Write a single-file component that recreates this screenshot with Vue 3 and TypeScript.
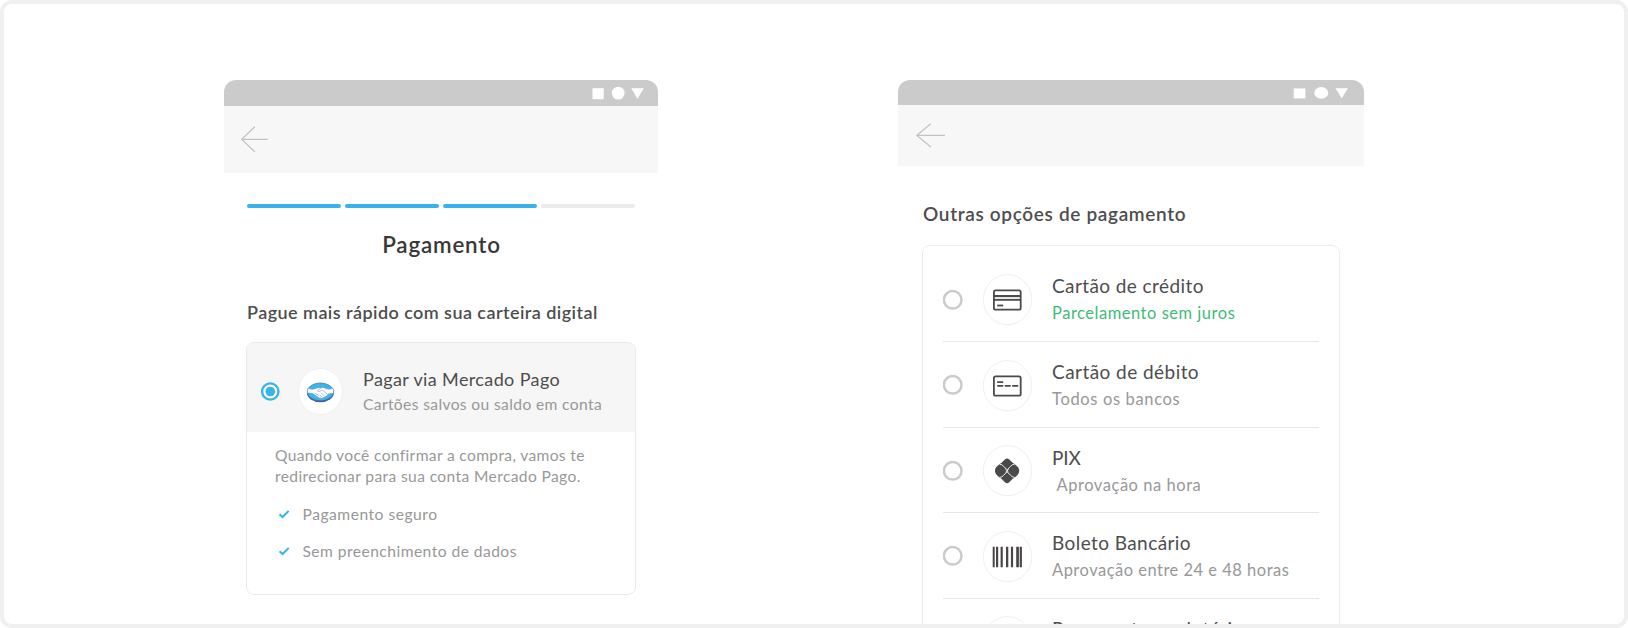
<script setup lang="ts">
type IconName = 'credit' | 'debit' | 'pix' | 'barcode' | 'none'

interface PaymentOption {
  title: string
  titleTracking: number
  note: string
  noteTracking: number
  icon: IconName
  highlight?: boolean
  indent?: boolean
}

const steps: boolean[] = [true, true, true, false]

const benefits: { label: string; tracking: number }[] = [
  { label: 'Pagamento seguro', tracking: 0.52 },
  { label: 'Sem preenchimento de dados', tracking: 0.46 },
]

const options: PaymentOption[] = [
  { title: 'Cartão de crédito', titleTracking: 0.41, note: 'Parcelamento sem juros', noteTracking: 0.52, icon: 'credit', highlight: true },
  { title: 'Cartão de débito', titleTracking: 0.45, note: 'Todos os bancos', noteTracking: 0.65, icon: 'debit' },
  { title: 'PIX', titleTracking: -0.1, note: 'Aprovação na hora', noteTracking: 0.54, icon: 'pix', indent: true },
  { title: 'Boleto Bancário', titleTracking: 0.42, note: 'Aprovação entre 24 e 48 horas', noteTracking: 0.49, icon: 'barcode' },
  { title: 'Pagamento em lotérica', titleTracking: 0.43, note: '', noteTracking: 0, icon: 'none' },
]
</script>

<template>
  <main class="frame">
    <section class="phone phone-left">
      <div class="status">
        <svg width="52" height="14" viewBox="0 0 52 14">
          <rect x="0.5" y="2.2" width="11.2" height="11" />
          <circle cx="26.2" cy="7.1" r="6.4" />
          <path d="M39.3 2.2h12.4l-6.2 10.9z" />
        </svg>
      </div>
      <div class="navbar">
        <svg class="arrow" width="28" height="27" viewBox="0 0 28 27">
          <path d="M26.3 13.4H.8M13.5 1 .8 13.4 13.5 25.5" />
        </svg>
      </div>
      <div class="content">
        <div class="steps">
          <span v-for="(done, i) in steps" :key="i" class="step" :class="{ done }"></span>
        </div>
        <h1 class="page-title">Pagamento</h1>
        <h2 class="wallet-title">Pague mais rápido com sua carteira digital</h2>
        <div class="wallet">
          <div class="wallet-head">
            <svg class="wallet-radio" width="19" height="19" viewBox="0 0 19 19">
              <circle cx="9.3" cy="9.5" r="8.2" fill="#fff" stroke="#35b3ea" stroke-width="2.3" />
              <circle cx="9.3" cy="9.5" r="4.8" fill="#35b3ea" />
            </svg>
            <svg class="wallet-logo" width="45" height="47" viewBox="0 0 45 47">
              <ellipse cx="22.5" cy="23.5" rx="22" ry="23" fill="#fff" stroke="#efefef" />
              <ellipse cx="22.4" cy="24.8" rx="13.5" ry="9.4" fill="#47659c" />
              <ellipse cx="22.4" cy="23.8" rx="13.1" ry="8.9" fill="#34b9ea" stroke="#4c6aa2" stroke-width=".7" />
              <path d="M10.1 20.3c3.1 1.2 6 1.1 8.8-.2 1.5-.6 2.7-.6 3.8 0 1.3-.7 2.6-.7 4 0 2.9 1.4 5.5 1.3 8.1.2.8 1.6.9 3.6.3 5.2-2.7-.1-4.8.3-5.5 1.2-.4 1.2-1.2 1.7-2.2 1.6-.5 1-1.3 1.4-2.2 1.2-.9 1.1-2.3 1.1-3.1.2-1 .5-2 0-2.3-.9-1.2.1-1.8-.5-1.8-1.4-1.4.2-2.2-.5-2.2-1.4-1.7-.7-3.8-1.1-6-.8-.6-1.7-.5-3.4.3-4.9z" fill="#fff" stroke="#7d8bc0" stroke-width=".6" />
              <path d="M22.7 20.1l-3.2 2.7c.9 1.1 2.4.9 3.7-.3l1.4-.3 5 4.3M23.2 25.2l3.6 2.9M21.5 27l3 2.2M16.2 26.6c.9-1.5 2.3-1.3 2.4 0 1.4-.5 2.2.3 1.7 1.6" fill="none" stroke="#8490c0" stroke-width=".6" />
            </svg>
            <div class="wallet-label">
              <div class="wallet-name">Pagar via Mercado Pago</div>
              <div class="wallet-note">Cartões salvos ou saldo em conta</div>
            </div>
          </div>
          <div class="wallet-body">
            <p class="redirect">
              <span class="line-a">Quando você confirmar a compra, vamos te</span><br />
              <span class="line-b">redirecionar para sua conta Mercado Pago.</span>
            </p>
            <ul class="benefits">
              <li v-for="b in benefits" :key="b.label">
                <svg width="12" height="10" viewBox="0 0 12 10"><path d="M1.5 5.2 4.6 8 10.7 1.9" /></svg>
                <span :style="{ letterSpacing: b.tracking + 'px' }">{{ b.label }}</span>
              </li>
            </ul>
          </div>
        </div>
      </div>
    </section>

    <section class="phone phone-right">
      <div class="status">
        <svg width="55" height="14" viewBox="0 0 55 14">
          <rect x="0.7" y="2.4" width="11.7" height="10" />
          <ellipse cx="28.3" cy="6.9" rx="7" ry="5.9" />
          <path d="M42.4 2.3H55l-6.3 9.9z" />
        </svg>
      </div>
      <div class="navbar">
        <svg class="arrow" width="30" height="25" viewBox="0 0 30 25">
          <path d="M28.5 12.4H.9M14.5 1 .9 12.4 14.5 23.8" />
        </svg>
      </div>
      <div class="content">
        <h2 class="options-title">Outras opções de pagamento</h2>
        <ul class="options">
          <li v-for="o in options" :key="o.title" class="option">
            <svg class="radio" width="20" height="20" viewBox="0 0 20 20">
              <circle cx="9.7" cy="9.8" r="8.8" fill="#fff" stroke="#cbcbcb" stroke-width="2.5" />
            </svg>
            <svg class="icon" width="50" height="52" viewBox="0 0 50 52">
              <g transform="translate(-0.6 -0.5)">
                <ellipse cx="25.1" cy="26.2" rx="24.2" ry="25.1" fill="#fff" stroke="#efefef" />
                <g v-if="o.icon === 'credit'" fill="none" stroke="#4a4a4a" stroke-width="1.8">
                  <path d="M12 24.4h26" stroke="#ddd" stroke-width="1.5" />
                  <rect x="11.5" y="16.9" width="26.8" height="19.3" rx="1.8" />
                  <path d="M11.5 22.5h26.8M11.5 26.4h26.8" />
                  <path d="M14.8 32h6" />
                </g>
                <g v-else-if="o.icon === 'debit'" fill="none" stroke="#4a4a4a" stroke-width="1.8">
                  <rect x="11.5" y="16.9" width="26.8" height="19.3" rx="1.8" />
                  <path d="M14.8 22.6h6M14.8 26.4h6M22.3 26.4h6M29.8 26.4h6" />
                </g>
                <g v-else-if="o.icon === 'pix'" transform="translate(24.7 26.3)">
                  <path
                    d="M-2.2-11.4Q0-13.4 2.2-11.4L5.6-8Q8.5-6.4 11-3.5 13.3 0 11 3.5 8.5 6.4 5.6 8L2.2 11.4Q0 13.4-2.2 11.4L-5.6 8Q-8.5 6.4-11 3.5-13.3 0-11-3.5-8.5-6.4-5.6-8Z"
                    fill="#4a4a4a"
                  />
                  <path
                    d="M-7.5-6.6Q-5-6.6-3.3-4.3L0-1 3.3-4.3Q5-6.6 7.5-6.6M-7.5 6.6Q-5 6.6-3.3 4.3L0 1 3.3 4.3Q5 6.6 7.5 6.6M-1.5-1.5 1.5 1.5M1.5-1.5-1.5 1.5"
                    fill="none"
                    stroke="#fff"
                    stroke-width=".9"
                  />
                </g>
                <path
                  v-else-if="o.icon === 'barcode'"
                  d="M10.3 16.3h2v20.5h-2zM13.6 16.3h2.2v20.5h-2.2zM18.2 16.3h2.2v20.5h-2.2zM23.6 16.3h2.3v20.5h-2.3zM28.5 16.3h2.2v20.5h-2.2zM33.8 16.3h2.7v20.5h-2.7zM37.3 16.3h2.2v20.5h-2.2z"
                  fill="#4a4646"
                />
              </g>
            </svg>
            <div class="option-text">
              <div class="option-title" :style="{ letterSpacing: o.titleTracking + 'px' }">{{ o.title }}</div>
              <div
                class="option-note"
                :class="{ highlight: o.highlight, indent: o.indent }"
                :style="{ letterSpacing: o.noteTracking + 'px' }"
              >{{ o.note }}</div>
            </div>
          </li>
        </ul>
      </div>
    </section>
  </main>
</template>

<style scoped>
.frame {
  box-sizing: border-box;
  width: 1628px;
  height: 628px;
  border: 4px solid #f0f0f0;
  border-radius: 12px;
  padding: 76px 0 0 220px;
  display: flex;
  align-items: flex-start;
  gap: 240px;
  overflow: hidden;
  background: #fff;
  color: #4d4d4d;
  font-family: Lato, "Open Sans", sans-serif;
}
h1, h2, p, ul {
  margin: 0;
  padding: 0;
}
ul {
  list-style: none;
}
svg {
  display: block;
  flex: none;
}
.phone {
  flex: none;
}
.phone-left {
  width: 434px;
}
.phone-right {
  width: 466px;
}
.status {
  box-sizing: border-box;
  background: #cbcbcb;
  border-radius: 12px 12px 0 0;
  display: flex;
  justify-content: flex-end;
  padding-top: 6px;
  fill: #fff;
}
.phone-left .status {
  height: 26px;
  padding-right: 14px;
}
.phone-right .status {
  height: 24.5px;
  padding-right: 16px;
}
.navbar {
  box-sizing: border-box;
  background: #f7f7f7;
}
.phone-left .navbar {
  height: 67px;
  padding: 20px 0 0 17px;
}
.phone-right .navbar {
  height: 61.5px;
  padding: 18px 0 0 18px;
}
.arrow {
  fill: none;
  stroke: #c2c2c2;
  stroke-width: 1.2;
  stroke-linecap: round;
}
.phone-left .content {
  padding: 31px 22px 0;
}
.phone-right .content {
  padding: 36px 24px 0;
}
.steps {
  display: flex;
  gap: 4px;
  margin: 0 1px;
}
.step {
  flex: 1;
  height: 4px;
  border-radius: 2px;
  background: #ebebeb;
}
.step.done {
  background: #35b3ea;
}
.page-title {
  margin-top: 24px;
  padding-left: 1px;
  font-size: 22.4px;
  line-height: 26px;
  font-weight: 600;
  letter-spacing: 0.8px;
  text-align: center;
  color: #383838;
}
.wallet-title {
  margin: 43px 0 0 1px;
  font-size: 18px;
  line-height: 22px;
  font-weight: 600;
  letter-spacing: 0.442px;
  white-space: nowrap;
}
.wallet {
  box-sizing: border-box;
  margin-top: 19px;
  height: 253px;
  border: 1px solid #e9e9e9;
  border-radius: 8px;
  overflow: hidden;
}
.wallet-head {
  box-sizing: border-box;
  height: 89px;
  background: #f6f6f6;
  display: flex;
  align-items: flex-start;
  padding-left: 14px;
}
.wallet-radio {
  margin-top: 39px;
}
.wallet-logo {
  margin: 25.4px 0 0 18px;
}
.wallet-label {
  margin: 25px 0 0 20px;
  white-space: nowrap;
}
.wallet-name {
  font-size: 18px;
  line-height: 22px;
  letter-spacing: 0.38px;
}
.wallet-note {
  margin-top: 4px;
  font-size: 15.6px;
  line-height: 20px;
  letter-spacing: 0.37px;
  color: #989898;
}
.wallet-body {
  padding: 13px 0 0 28px;
  font-size: 15.6px;
  color: #989898;
}
.redirect {
  line-height: 21px;
  white-space: nowrap;
}
.line-a {
  letter-spacing: 0.34px;
}
.line-b {
  letter-spacing: 0.372px;
}
.benefits {
  margin-top: 17px;
  display: flex;
  flex-direction: column;
  gap: 17px;
}
.benefits li {
  display: flex;
  align-items: center;
  gap: 12.5px;
  line-height: 20px;
  padding-left: 3px;
}
.benefits path {
  fill: none;
  stroke: #35b3ea;
  stroke-width: 2;
}
.options-title {
  margin-left: 1px;
  font-size: 19px;
  line-height: 24px;
  font-weight: 600;
  letter-spacing: 0.66px;
  white-space: nowrap;
}
.options {
  box-sizing: border-box;
  margin-top: 19.3px;
  border: 1.5px solid #ececec;
  border-radius: 8px;
  padding: 10.4px 20px 0;
}
.option {
  box-sizing: border-box;
  height: 85.6px;
  border-bottom: 1.5px solid #e6e6e6;
  display: flex;
  align-items: flex-start;
}
.radio {
  margin-top: 32.9px;
}
.icon {
  margin: 17.4px 0 0 19.5px;
}
.option-text {
  margin: 17.7px 0 0 19.5px;
  white-space: nowrap;
}
.option-title {
  font-size: 19px;
  line-height: 24px;
}
.option-note {
  margin-top: 5px;
  font-size: 16.5px;
  line-height: 20px;
  color: #989898;
}
.option-note.highlight {
  color: #3fbb78;
}
.option-note.indent {
  padding-left: 4.5px;
}
</style>

<style>
body {
  background: #fff;
  overflow: hidden;
}
</style>
